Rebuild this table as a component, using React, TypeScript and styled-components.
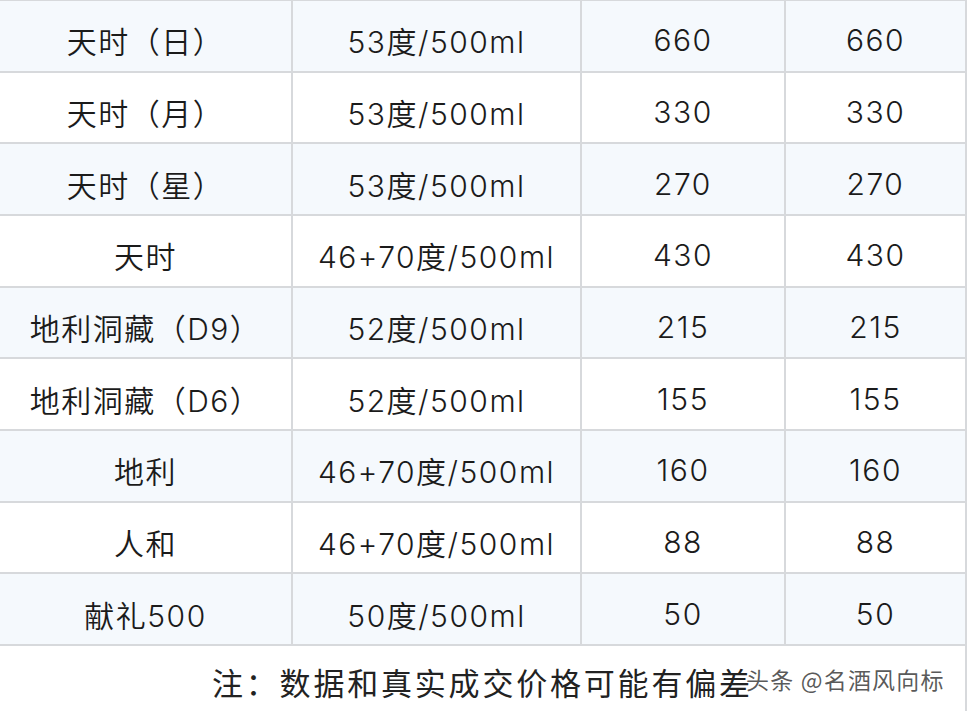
import React from 'react'
import styled, { createGlobalStyle } from 'styled-components'

const LINE = '#d7d9dc'
const STRIPE = '#f5f9fd'
const INK = '#1b1b1b'

const rows: [string, string, string, string][] = [
  ['天时（日）', '53度/500ml', '660', '660'],
  ['天时（月）', '53度/500ml', '330', '330'],
  ['天时（星）', '53度/500ml', '270', '270'],
  ['天时', '46+70度/500ml', '430', '430'],
  ['地利洞藏（D9）', '52度/500ml', '215', '215'],
  ['地利洞藏（D6）', '52度/500ml', '155', '155'],
  ['地利', '46+70度/500ml', '160', '160'],
  ['人和', '46+70度/500ml', '88', '88'],
  ['献礼500', '50度/500ml', '50', '50'],
]

const GlobalStyle = createGlobalStyle`
  html, body {
    margin: 0;
    padding: 0;
    background: #ffffff;
  }
  body {
    font-family: Inter, "Noto Sans CJK SC", sans-serif;
    color: ${INK};
  }
`

const Page = styled.div`
  width: 967px;
  height: 711px;
  overflow: hidden;
  background: #ffffff;
`

const Sheet = styled.div`
  width: 965px;
  border-right: 2px solid ${LINE};
  margin-top: -1px;
`

const Table = styled.div`
  display: grid;
  grid-template-columns: 293px 289px 204px 1fr;
  border-top: 2px solid ${LINE};
`

const Row = styled.div<{ $striped: boolean }>`
  display: contents;
  & > div {
    background: ${({ $striped }) => ($striped ? STRIPE : '#ffffff')};
  }
`

const Cell = styled.div<{ $last: boolean }>`
  box-sizing: border-box;
  height: 71.67px;
  display: flex;
  align-items: center;
  justify-content: center;
  padding-top: 9px;
  border-bottom: 2px solid ${LINE};
  border-right: ${({ $last }) => ($last ? 'none' : `2px solid ${LINE}`)};
  font-size: 30px;
  font-weight: 350;
  letter-spacing: 1.5px;
  white-space: nowrap;
`

const Footer = styled.div`
  position: relative;
  height: 70px;
  display: flex;
  align-items: center;
  padding-left: 212px;
  padding-top: 1px;
  box-sizing: border-box;
`

const Note = styled.span`
  font-family: "Noto Sans CJK SC", sans-serif;
  font-size: 31px;
  letter-spacing: 2.8px;
  color: #222222;
`

const Watermark = styled.span`
  position: absolute;
  left: 746px;
  top: 16px;
  font-family: "Noto Sans CJK SC", sans-serif;
  font-size: 23px;
  letter-spacing: 1.2px;
  color: rgba(60, 60, 60, 0.85);
  text-shadow: 0 0 2px #ffffff, 0 0 1px #ffffff;
  white-space: nowrap;
`

export default function App() {
  return (
    <Page>
      <GlobalStyle />
      <Sheet>
        <Table>
          {rows.map((row, i) => (
            <Row key={row[0]} $striped={i % 2 === 0}>
              {row.map((text, j) => (
                <Cell key={j} $last={j === row.length - 1}>
                  {text}
                </Cell>
              ))}
            </Row>
          ))}
        </Table>
        <Footer>
          <Note>注：数据和真实成交价格可能有偏差</Note>
          <Watermark>头条 @名酒风向标</Watermark>
        </Footer>
      </Sheet>
    </Page>
  )
}
